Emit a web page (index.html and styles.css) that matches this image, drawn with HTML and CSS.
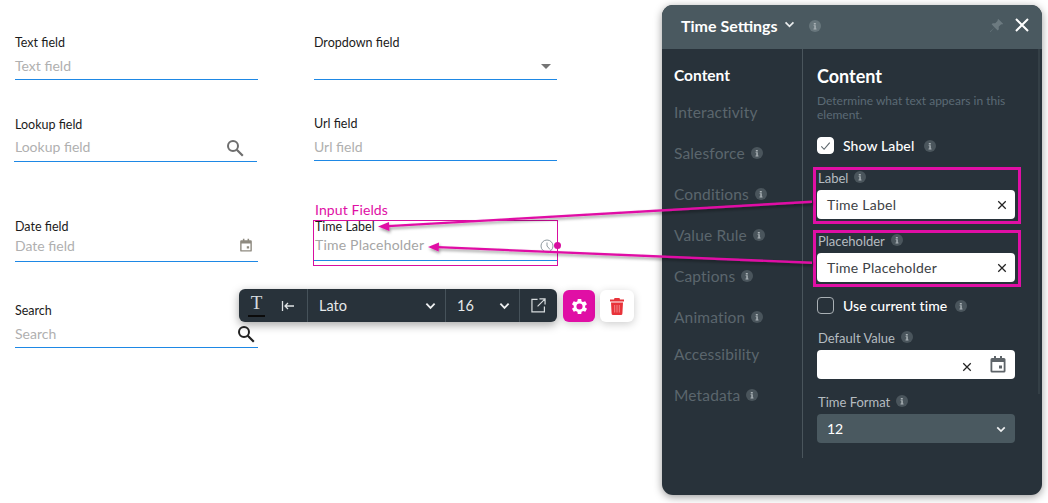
FILE: index.html
```html
<!DOCTYPE html>
<html lang="en">
<head>
<meta charset="utf-8">
<title>Time Settings</title>
<link rel="stylesheet" href="styles.css">
</head>
<body>
<svg class="defs" width="0" height="0" aria-hidden="true">
  <symbol id="info" viewBox="0 0 12 12"><circle cx="6" cy="6" r="6" fill="currentColor"/><path d="M4.8 3h2v1.400h-2zM4.600 5.200h2.200v3.300h.7v.9H4.500v-.9h.8V6.100h-.7z" fill="#a9b1b5"/></symbol>
  <symbol id="search" viewBox="0 0 18 18"><circle cx="7" cy="7" r="5" fill="none" stroke="currentColor" stroke-width="2"/><path d="M10.800 10.800l6 6" stroke="currentColor" stroke-width="2.200" fill="none"/></symbol>
  <symbol id="calendar" viewBox="0 0 18 18"><path d="M5 1h2v2h4V1h2v2h2a1.500 1.500 0 0 1 1.500 1.500V16a1.500 1.500 0 0 1-1.500 1.500H3A1.500 1.500 0 0 1 1.500 16V4.500A1.500 1.500 0 0 1 3 3h2zM3.300 7v8.700h11.400V7zM10 10.500h3v3h-3z" fill="currentColor" fill-rule="evenodd"/></symbol>
  <symbol id="clear" viewBox="0 0 12 12"><path d="M1.500 1.500l9 9M10.500 1.500l-9 9" stroke="currentColor" stroke-width="1.500" fill="none"/></symbol>
  <symbol id="chev" viewBox="0 0 12 8"><path d="M1.500 1.500L6 6l4.500-4.500" stroke="currentColor" stroke-width="2" fill="none"/></symbol>
</svg>

<main class="stage">
  <section class="form">
    <div class="col col-left">
      <div class="field f-text"><span class="lbl">Text field</span><span class="ph">Text field</span></div>
      <div class="field f-lookup"><span class="lbl">Lookup field</span><span class="ph">Lookup field</span><svg class="f-icon grey"><use href="#search"/></svg></div>
      <div class="field f-date"><span class="lbl">Date field</span><span class="ph">Date field</span><svg class="f-icon cal"><use href="#calendar"/></svg></div>
      <div class="field f-search"><span class="lbl">Search</span><span class="ph">Search</span><svg class="f-icon black"><use href="#search"/></svg></div>
    </div>
    <div class="col col-right">
      <div class="field f-drop"><span class="lbl">Dropdown field</span><span class="ph">&nbsp;</span><span class="caret"></span></div>
      <div class="field f-url"><span class="lbl">Url field</span><span class="ph">Url field</span></div>
      <div class="input-title">Input Fields</div>
      <div class="selected">
        <div class="field f-time"><span class="lbl">Time Label</span><span class="ph spaced">Time Placeholder</span>
          <svg class="f-clock" viewBox="0 0 14 14"><circle cx="7" cy="7" r="6" fill="none" stroke="#8f9aa0" stroke-width="1"/><path d="M7 3.500V7l3 3.500" stroke="#8f9aa0" fill="none"/></svg>
        </div>
        <span class="handle"></span>
      </div>
    </div>
  </section>

  <div class="toolbar">
    <div class="tb-group tb-a">
      <span class="tb-t">T</span>
      <svg class="tb-align" viewBox="0 0 14 12"><path d="M1.500 1v10M13 6H4M7 3L4 6l3 3" stroke="#dfe3e5" stroke-width="1.300" fill="none"/></svg>
    </div>
    <div class="tb-group tb-font"><span>Lato</span><svg class="tb-chev"><use href="#chev"/></svg></div>
    <div class="tb-group tb-size"><span>16</span><svg class="tb-chev"><use href="#chev"/></svg></div>
    <div class="tb-group tb-link">
      <svg viewBox="0 0 16 16" width="15" height="15"><path d="M7 1.500H1v13.300h13.300V9M9 1h6v6M15 1L7 9" stroke="#d5dadc" stroke-width="1.300" fill="none"/></svg>
    </div>
  </div>
  <button class="tb-btn gear" aria-label="Settings">
    <svg viewBox="0 0 24 24" width="21" height="21"><path fill="#fff" fill-rule="evenodd" d="M19.400 13a7.500 7.500 0 0 0 0-2l2.100-1.600-2-3.500-2.500 1a7.500 7.500 0 0 0-1.700-1L15 3.300h-4l-.4 2.600a7.500 7.500 0 0 0-1.700 1l-2.500-1-2 3.500L6.500 11a7.500 7.500 0 0 0 0 2l-2.100 1.600 2 3.500 2.500-1a7.500 7.500 0 0 0 1.700 1l.4 2.600h4l.4-2.600a7.500 7.500 0 0 0 1.700-1l2.500 1 2-3.500zM13 15.500a3.500 3.500 0 1 1 0-7 3.500 3.500 0 0 1 0 7z" transform="translate(-1 0)"/></svg>
  </button>
  <button class="tb-btn trash" aria-label="Delete">
    <svg viewBox="0 0 14 17" width="14" height="17"><path fill="#e8333a" d="M4.500 0h5l.5 1.500H14v2H0v-2h4zM1 4.500h12l-.6 11a1.500 1.500 0 0 1-1.500 1.500H3.100a1.500 1.500 0 0 1-1.500-1.500z"/><path d="M4.700 7v7.500M7 7v7.500M9.300 7v7.500" stroke="#fff" stroke-opacity=".4" fill="none"/></svg>
  </button>

  <aside class="panel">
    <header class="p-head">
      <span class="p-title">Time Settings</span>
      <svg class="p-chev"><use href="#chev"/></svg>
      <svg class="i i-head"><use href="#info"/></svg>
      <svg class="p-pin" viewBox="0 0 16 16"><path d="M10 1l5 5-1 1-1-.3-2.700 2.700.2 2.600-1.200 1.200L6 10l-4.500 5L1 14.500 6 10 2.800 6.700 4 5.500l2.600.2L9.300 3 9 2z" fill="#6c7a80"/></svg>
      <svg class="p-close" viewBox="0 0 14 14"><path d="M1 1l12 12M13 1L1 13" stroke="#fff" stroke-width="2" fill="none"/></svg>
    </header>
    <div class="p-body">
      <nav class="p-nav">
        <a class="active">Content</a>
        <a class="n-int">Interactivity</a>
        <a>Salesforce<svg class="i"><use href="#info"/></svg></a>
        <a>Conditions<svg class="i"><use href="#info"/></svg></a>
        <a>Value Rule<svg class="i"><use href="#info"/></svg></a>
        <a>Captions<svg class="i"><use href="#info"/></svg></a>
        <a>Animation<svg class="i"><use href="#info"/></svg></a>
        <a class="n-acc">Accessibility</a>
        <a class="n-meta">Metadata<svg class="i"><use href="#info"/></svg></a>
      </nav>
      <div class="p-main">
        <h2>Content</h2>
        <p class="desc">Determine what text appears in this element.</p>
        <div class="check-row r-show">
          <span class="box on"><svg viewBox="0 0 16 16" width="16" height="16"><path d="M3.500 8.500l3 3 6-7" stroke="#5c666c" stroke-width="1.200" fill="none"/></svg></span>
          <span>Show Label</span><svg class="i"><use href="#info"/></svg>
        </div>
        <div class="hl">
          <div class="f-lab">Label<svg class="i"><use href="#info"/></svg></div>
          <div class="inp"><span>Time Label</span><svg class="x"><use href="#clear"/></svg></div>
        </div>
        <div class="hl hl2">
          <div class="f-lab">Placeholder<svg class="i"><use href="#info"/></svg></div>
          <div class="inp"><span>Time Placeholder</span><svg class="x"><use href="#clear"/></svg></div>
        </div>
        <div class="check-row r-use">
          <span class="box"></span>
          <span>Use current time</span><svg class="i"><use href="#info"/></svg>
        </div>
        <div class="f-lab plain l-def">Default Value<svg class="i"><use href="#info"/></svg></div>
        <div class="inp date"><svg class="x"><use href="#clear"/></svg><svg class="d-cal"><use href="#calendar"/></svg></div>
        <div class="f-lab plain l-fmt">Time Format<svg class="i"><use href="#info"/></svg></div>
        <div class="sel"><span>12</span><svg class="s-chev"><use href="#chev"/></svg></div>
      </div>
      <span class="scroll"></span>
    </div>
  </aside>

  <svg class="arrows" width="1048" height="503" viewBox="0 0 1048 503" aria-hidden="true">
    <defs><filter id="sh" x="-5%" y="-100%" width="110%" height="300%"><feDropShadow dx="1" dy="2" stdDeviation="1.500" flood-color="#000" flood-opacity=".4"/></filter></defs>
    <g filter="url(#sh)" fill="#e00fa5">
      <path d="M812 200.500L388 225.100l.1 2.200L812 203z"/><path d="M378 226.500l11-4.500.4 9z"/>
      <path d="M812 261.500L438 246.100l-.1 2.200L812 264z"/><path d="M428 247l11-4.500-.3 9z"/>
    </g>
  </svg>
</main>
</body>
</html>
```
FILE: styles.css
```css
* { box-sizing: border-box; }
html, body { margin: 0; padding: 0; }
body { width: 1048px; height: 503px; overflow: hidden; background: #fff; font-family: Lato, "Liberation Sans", sans-serif; }
.defs { position: absolute; }
.stage { position: relative; width: 1048px; height: 503px; overflow: hidden; }

.form { display: flex; padding-top: 35px; padding-left: 15px; }
.col { width: 243px; display: flex; flex-direction: column; }
.col-right { margin-left: 57px; }

.field { position: relative; display: flex; flex-direction: column; border-bottom: 1px solid #1e88e5; }
.lbl { font-size: 12.500px; line-height: 16px; padding-top: 1px; height: 17px; color: #1b1b1b; }
.ph { font-size: 14px; line-height: 20px; color: #b0b0b0; }
.ph.spaced { letter-spacing: .2px; color: #a5a5a5; }

.f-text { height: 45px; }
.f-text .lbl { margin-top: -1px; }
.f-text .ph { margin-top: 5px; }
.f-lookup { width: 243px; height: 46px; margin-top: 36px; margin-left: -1px; padding-left: 1px; }
.f-lookup .ph { margin-top: 4px; }
.f-date { height: 46px; margin-top: 54px; }
.f-date .lbl { margin-top: 2px; }
.f-date .ph { margin-top: 1px; }
.f-search { height: 46px; margin-top: 40px; }
.f-search .ph { margin-top: 5px; }

.f-drop { width: 243px; height: 45px; margin-left: -1px; }
.f-drop .lbl { margin-top: -1px; }
.f-drop .ph { margin-top: 5px; }
.f-url { width: 243px; height: 45px; margin-top: 36px; margin-left: -1px; }
.f-url .lbl { margin-top: -1px; }
.f-url .ph { margin-top: 5px; }
.input-title { margin-top: 40px; height: 18px; font-size: 14px; line-height: 18px; color: #e00fa5; letter-spacing: .1px; }
.selected { position: relative; width: 245px; height: 46px; margin-top: 1px; margin-left: -2px; border: 1px solid #d80ea0; }
.f-time { width: 243px; height: 40px; }
.f-time .lbl { margin-left: 1px; line-height: 11px; padding-top: 0; height: 11px; }
.f-time .ph { margin-top: 3px; margin-left: 1px; }

.f-icon { position: absolute; width: 18px; height: 18px; }
.f-icon.grey { color: #6e6e6e; right: 13px; top: 23px; }
.f-icon.black { color: #222; right: 3px; top: 23px; }
.f-icon.cal { color: #8e8a80; width: 14px; height: 14px; right: 5px; top: 22px; }
.caret { position: absolute; right: 6px; top: 29px; width: 0; height: 0; border-left: 5px solid transparent; border-right: 5px solid transparent; border-top: 5px solid #757575; }
.f-clock { position: absolute; width: 14px; height: 14px; left: 226px; top: 18px; }
.handle { position: absolute; right: -4px; top: 21px; width: 7px; height: 7px; border-radius: 50%; background: #d80ea0; }

.toolbar { position: absolute; left: 239px; top: 289px; width: 318px; height: 33px; display: flex; background: #28323a; border-radius: 6px; box-shadow: 0 3px 10px rgba(0,0,0,.35); color: #e6e9ea; font-size: 14.500px; }
.tb-group { height: 33px; display: flex; align-items: center; border-right: 1px solid #46525a; }
.tb-a { width: 69px; padding-left: 9px; }
.tb-t { width: 17px; margin-top: -2px; font-family: "Liberation Serif", serif; font-size: 19px; line-height: 22px; text-align: center; color: #d5dadc; border-bottom: 2px solid #0b0b0b; height: 25px; }
.tb-align { width: 14px; height: 12px; margin-left: 16px; }
.tb-font { width: 138px; padding-left: 11px; justify-content: space-between; padding-right: 9px; }
.tb-size { width: 74px; padding-left: 11px; justify-content: space-between; padding-right: 9px; }
.tb-link { width: 37px; border-right: 0; justify-content: center; }
.tb-chev { width: 11px; height: 8px; color: #eef0f1; }
.tb-btn { position: absolute; top: 290px; height: 32px; padding: 0; border: 0; display: flex; align-items: center; justify-content: center; border-radius: 6px; box-shadow: 0 2px 8px rgba(0,0,0,.2); }
.gear { left: 563px; width: 32px; background: #e00fa5; }
.trash { left: 600px; width: 34px; background: #fff; }

.panel { position: absolute; left: 662px; top: 5px; width: 380px; height: 490px; border-radius: 11px; background: #28323a; box-shadow: 0 2px 8px rgba(0,0,0,.4); overflow: hidden; color: #fff; }
.p-head { position: relative; height: 44px; display: flex; align-items: center; padding-left: 19px; padding-bottom: 2px; background: #4a5960; }
.p-title { font-size: 16px; font-weight: 700; color: #fff; line-height: 42px; }
.p-chev { width: 11px; height: 7px; margin-left: 6px; margin-top: -3px; color: #e9eced; }
.i { width: 12px; height: 12px; margin-left: 8px; flex: none; color: #4a555c; }
.i-head { margin-left: 14px; margin-top: -1px; color: #68767c; }
.p-pin { position: absolute; left: 327px; top: 13px; width: 15px; height: 15px; }
.p-close { position: absolute; left: 353px; top: 13px; width: 14px; height: 14px; }

.p-body { position: relative; display: flex; height: 446px; }
.p-nav { width: 141px; height: 409px; padding-left: 12px; border-right: 1px solid #4a555c; display: flex; flex-direction: column; }
.p-nav a { display: flex; align-items: center; height: 20px; margin-top: 21px; font-size: 15.500px; line-height: 20px; color: #5b666d; letter-spacing: .15px; }
.p-nav a .i { margin-left: 6px; }
.p-nav a.active { margin-top: 16px; color: #fff; font-weight: 700; font-size: 15.500px; letter-spacing: 0; }
.p-nav a.n-int { margin-top: 17px; }
.p-nav a.n-acc { margin-top: 17px; }

.p-main { width: 222px; padding-left: 13px; display: flex; flex-direction: column; }
.p-main h2 { margin: 16px 0 0 1px; font-size: 18px; line-height: 22px; font-weight: 700; color: #fff; }
.desc { margin: 7px 0 0 1px; width: 190px; font-size: 12px; line-height: 14px; color: #5b6a75; }
.check-row { display: flex; align-items: center; margin-left: 1px; height: 17px; font-size: 14px; font-weight: 500; color: #fff; letter-spacing: .1px; }
.r-show { margin-top: 15px; }
.r-show .i { margin-left: 10px; }
.r-use { margin-top: 10px; }
.box { width: 17px; height: 17px; margin-right: 9px; border: 1px solid #a9b0b4; border-radius: 4px; display: flex; align-items: center; justify-content: center; }
.box.on { background: #fff; border-color: #fff; }

.hl { width: 208px; height: 57px; margin-top: 13px; margin-left: -3px; padding: 0 1px; border: 3px solid #e00fa5; }
.hl2 { margin-top: 6px; }
.f-lab { display: flex; align-items: center; height: 16px; font-size: 13px; color: #b5bcc0; }
.hl .f-lab { margin-left: 1px; }
.f-lab .i { margin-left: 6px; margin-top: -3px; }
.hl .inp { margin-top: 4px; width: 198px; }
.inp { position: relative; height: 29px; background: #fff; border-radius: 4px; display: flex; align-items: center; padding-left: 10px; font-size: 14px; color: #3d4246; letter-spacing: .25px; }
.x { position: absolute; left: 180px; top: 10px; width: 10px; height: 10px; color: #222; }
.plain { margin-left: 2px; }
.l-def { margin-top: 16px; }
.l-fmt { margin-top: 15px; }
.date { width: 198px; margin-left: 1px; margin-top: 4px; }
.date .x { left: 145px; top: 12px; }
.d-cal { position: absolute; left: 172px; top: 5px; width: 18px; height: 18px; color: #5e6469; }
.sel { position: relative; width: 198px; height: 29px; margin-left: 1px; margin-top: 4px; padding-left: 10px; display: flex; align-items: center; background: #4a5960; border-radius: 4px; font-size: 14px; color: #fff; }
.s-chev { position: absolute; left: 179px; top: 12px; width: 10px; height: 7px; color: #eef0f1; }
.scroll { position: absolute; left: 376px; top: 0; width: 2px; height: 345px; background: #343f46; }

.arrows { position: absolute; left: 0; top: 0; pointer-events: none; }
```
